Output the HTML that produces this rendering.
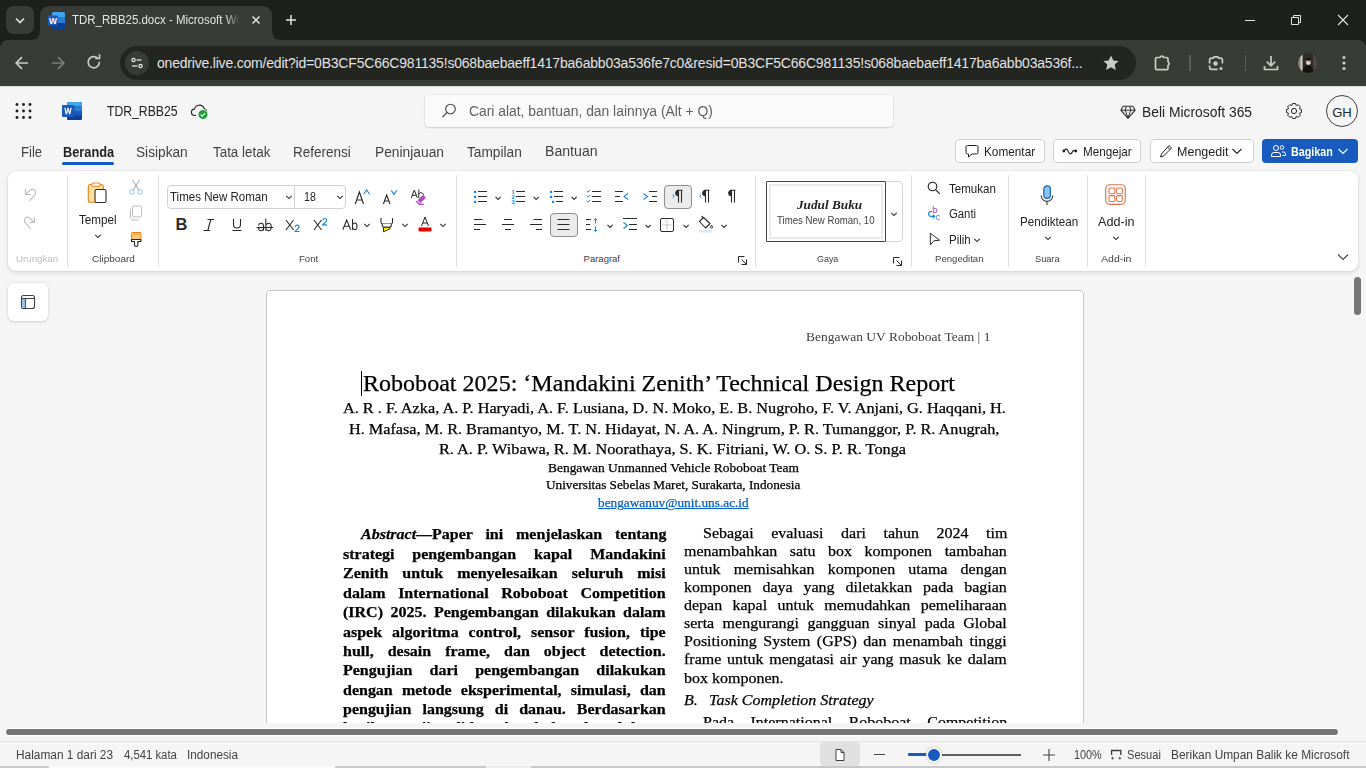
<!DOCTYPE html>
<html><head><meta charset="utf-8">
<style>
*{margin:0;padding:0;box-sizing:border-box}
html,body{width:1366px;height:768px;overflow:hidden;background:#f5f5f5;font-family:"Liberation Sans",sans-serif}
.a{position:absolute}
.sv{position:absolute;overflow:visible}
.ct{color:#e3e3e3;font-size:12px;white-space:nowrap;position:absolute}
.ui{color:#242424;white-space:nowrap;position:absolute}
.serif{font-family:"Liberation Serif",serif;color:#000;white-space:nowrap;position:absolute}
</style></head>
<body>
<!-- ============ CHROME ============ -->
<div class="a" style="left:0;top:0;width:1366px;height:40px;background:#1d201b"></div>
<div class="a" style="left:6px;top:6px;width:28px;height:28px;border-radius:8px;background:#383c36"></div>
<svg class="sv" style="left:0;top:0" width="40" height="40"><path d="M16 18.5l4 4 4-4" stroke="#e3e3e3" stroke-width="1.6" fill="none"/></svg>
<!-- active tab -->
<div class="a" style="left:40px;top:6px;width:232px;height:36px;background:#383c36;border-radius:9px 9px 0 0"></div>
<svg class="sv" style="left:30px;top:30px" width="252" height="12"><path d="M0 10 Q10 10 10 0 L10 10Z" fill="#383c36"/><path d="M252 10 Q242 10 242 0 L242 10Z" fill="#383c36"/></svg>
<!-- word icon small -->
<svg class="sv" style="left:48px;top:12px" width="17" height="17" viewBox="0 0 17 17">
 <rect x="4" y="0" width="13" height="17" rx="1.5" fill="#185abd"/>
 <rect x="4" y="0" width="13" height="6" rx="1.5" fill="#41a5ee"/>
 <rect x="4" y="5" width="13" height="6" fill="#2b7cd3"/>
 <rect x="4" y="11" width="13" height="6" rx="1.5" fill="#103f91"/>
 <rect x="0" y="3.5" width="10" height="10" rx="1" fill="#185abd"/>
 <text x="5" y="11.5" font-family="Liberation Sans" font-weight="bold" font-size="8.5" fill="#fff" text-anchor="middle">W</text>
</svg>
<div class="ct" style="left:72px;top:13px;font-size:12px;width:168px;height:16px;overflow:hidden;-webkit-mask-image:linear-gradient(90deg,#000 calc(100% - 14px),transparent)"><span style="display:inline-block;transform:scaleX(0.956);transform-origin:0 0">TDR_RBB25.docx - Microsoft Word</span></div>
<svg class="sv" style="left:248px;top:12px" width="16" height="16"><path d="M4.5 4.5l7 7M11.5 4.5l-7 7" stroke="#e3e3e3" stroke-width="1.5"/></svg>
<svg class="sv" style="left:283px;top:12px" width="16" height="16"><path d="M8 3v10M3 8h10" stroke="#e3e3e3" stroke-width="1.5"/></svg>
<!-- window controls -->
<svg class="sv" style="left:1240px;top:10px" width="20" height="20"><path d="M5 10.5h10" stroke="#e3e3e3" stroke-width="1"/></svg>
<svg class="sv" style="left:1286px;top:10px" width="20" height="20"><path d="M5.5 7.5h7v7h-7z M7.5 7.5v-2h7v7h-2" stroke="#e3e3e3" stroke-width="1" fill="none"/></svg>
<svg class="sv" style="left:1333px;top:10px" width="20" height="20"><path d="M5 5l10 10M15 5l-10 10" stroke="#e3e3e3" stroke-width="1.1"/></svg>

<!-- toolbar -->
<div class="a" style="left:0;top:38px;width:12px;height:12px;background:#1d201b"></div>
<div class="a" style="left:1354px;top:38px;width:12px;height:12px;background:#1d201b"></div>
<div class="a" style="left:0;top:40px;width:1366px;height:47px;background:#383c36;border-radius:8px 8px 0 0"></div>
<svg class="sv" style="left:12px;top:53px" width="20" height="20"><path d="M16 10H4.5M10 4.2L4.2 10 10 15.8" stroke="#c7ccc4" stroke-width="1.7" fill="none"/></svg>
<svg class="sv" style="left:48px;top:53px" width="20" height="20"><path d="M4 10h11.5M10 4.2l5.8 5.8L10 15.8" stroke="#7a7e78" stroke-width="1.7" fill="none"/></svg>
<svg class="sv" style="left:84px;top:53px" width="20" height="20"><path d="M15.3 8.8A5.6 5.6 0 1 1 13.6 5.2" stroke="#c7ccc4" stroke-width="1.7" fill="none"/><path d="M11.2 5.5h4.3V1.2" stroke="#c7ccc4" stroke-width="1.7" fill="none"/></svg>
<div class="a" style="left:120px;top:46px;width:1016px;height:34px;border-radius:17px;background:#222520"></div>
<div class="a" style="left:125px;top:51px;width:24px;height:24px;border-radius:12px;background:#383c36"></div>
<svg class="sv" style="left:127px;top:53px" width="20" height="20"><circle cx="6.5" cy="7" r="1.6" stroke="#e3e3e3" stroke-width="1.3" fill="none"/><path d="M9.5 7h5" stroke="#e3e3e3" stroke-width="1.3"/><circle cx="13.5" cy="13" r="1.6" stroke="#e3e3e3" stroke-width="1.3" fill="none"/><path d="M5 13h5.5" stroke="#e3e3e3" stroke-width="1.3"/></svg>
<div class="ct" id="url" style="left:157px;top:55px;font-size:14px;letter-spacing:-0.2px;color:#e3e3e3">onedrive.live.com/edit?id=0B3CF5C66C981135!s068baebaeff1417ba6abb03a536fe7c0&amp;resid=0B3CF5C66C981135!s068baebaeff1417ba6abb03a536f...</div>
<svg class="sv" style="left:1101px;top:53px" width="20" height="20"><path d="M10 2.5l2.3 4.9 5.3.6-3.9 3.6 1.1 5.3L10 14.2l-4.8 2.7 1.1-5.3-3.9-3.6 5.3-.6z" fill="#c7ccc4"/></svg>
<svg class="sv" style="left:1152px;top:53px" width="22" height="20"><path d="M3.5 5.8a1.3 1.3 0 0 1 1.3-1.3H8a2 2 0 0 1 3.8 0h2.9a1.3 1.3 0 0 1 1.3 1.3v3a2 2 0 0 1 0 3.6v3a1.3 1.3 0 0 1-1.3 1.3H4.8a1.3 1.3 0 0 1-1.3-1.3z" stroke="#c7ccc4" stroke-width="1.7" fill="none" stroke-linejoin="round"/></svg>
<div class="a" style="left:1189px;top:55px;width:1.5px;height:16px;background:#5b5f5a"></div>
<svg class="sv" style="left:1206px;top:53px" width="20" height="20"><path d="M3.6 10.5V7.2a2 2 0 0 1 2-2h1.6l1-1.3h3.6l1 1.3h1.6a2 2 0 0 1 2 2v3.3M3.6 12.5v1.8a2 2 0 0 0 2 2h6" stroke="#c7ccc4" stroke-width="1.7" fill="none"/><circle cx="9.5" cy="10.5" r="2.2" fill="#c7ccc4"/><circle cx="15" cy="15.5" r="1.5" fill="#c7ccc4"/></svg>
<div class="a" style="left:1244.5px;top:55px;width:1.5px;height:16px;background:#5b5f5a"></div>
<svg class="sv" style="left:1261px;top:53px" width="20" height="20"><path d="M10 3v9.5M5.8 8.6L10 12.8l4.2-4.2M3.5 13v3.5h13V13" stroke="#c7ccc4" stroke-width="1.7" fill="none"/></svg>
<svg class="sv" style="left:1298px;top:53px" width="20" height="20"><defs><clipPath id="avc"><circle cx="10" cy="10" r="10"/></clipPath></defs><g clip-path="url(#avc)"><rect width="20" height="20" fill="#2e2b28"/><rect x="0" y="0" width="5" height="20" fill="#8a847d"/><rect x="2.5" y="0" width="1.5" height="20" fill="#cfcac3"/><rect x="15" y="0" width="5" height="20" fill="#4a4642"/><path d="M4.5 20c0-5 2.3-7.5 5.7-7.5s5.5 2.5 5.5 7.5z" fill="#121110"/><ellipse cx="10.3" cy="8.8" rx="2.5" ry="3" fill="#b9aa9c"/><path d="M7.6 6.8c.4-2.3 4.6-2.3 5.4 0l-.2.8H7.8z" fill="#151413"/><rect x="8.6" y="9.4" width="3.6" height="2.2" rx="1" fill="#e9e9e6"/></g></svg>
<svg class="sv" style="left:1334px;top:53px" width="20" height="20"><circle cx="10" cy="4.5" r="1.6" fill="#c7ccc4"/><circle cx="10" cy="10" r="1.6" fill="#c7ccc4"/><circle cx="10" cy="15.5" r="1.6" fill="#c7ccc4"/></svg>

<!-- ============ WORD ============ -->
<div class="a" style="left:0;top:86px;width:1366px;height:1px;background:#dcdcdc"></div>

<!-- ============ WORD HEADER ============ -->
<svg class="sv" style="left:13px;top:101px" width="20" height="20"><g fill="#1f1f1f"><circle cx="4" cy="3.5" r="1.45"/><circle cx="10.5" cy="3.5" r="1.45"/><circle cx="17" cy="3.5" r="1.45"/><circle cx="4" cy="10" r="1.45"/><circle cx="10.5" cy="10" r="1.45"/><circle cx="17" cy="10" r="1.45"/><circle cx="4" cy="16.5" r="1.45"/><circle cx="10.5" cy="16.5" r="1.45"/><circle cx="17" cy="16.5" r="1.45"/></g></svg>
<svg class="sv" style="left:62px;top:102px" width="21" height="18" viewBox="0 0 21 18">
 <rect x="5" y="0" width="15" height="18" rx="1" fill="#103f91"/>
 <path d="M6 0h13a1 1 0 0 1 1 1v3.5H5V1a1 1 0 0 1 1-1z" fill="#41a5ee"/>
 <rect x="5" y="4.5" width="15" height="4.5" fill="#2b7cd3"/>
 <rect x="5" y="9" width="15" height="4.5" fill="#185abd"/>
 <rect x="5.5" y="4" width="7" height="12" fill="#0b3a8a" opacity=".5"/>
 <rect x="0" y="3" width="12" height="12" rx="1" fill="#185abd"/>
 <path d="M2.3 5.8l1.4 6.4h1.3L6 8l1 4.2h1.3l1.4-6.4H8.5l-.9 4.3-1-4.3H5.4l-1 4.3-.9-4.3z" fill="#fff"/>
</svg>
<div class="ui" id="docname" style="left:107.00px;top:103.20px;font-size:14px;transform:scaleX(0.8716);transform-origin:0 0;">TDR_RBB25</div>
<svg class="sv" style="left:190px;top:101.5px" width="20" height="20"><path d="M6 13.5H4.8a3.2 3.2 0 0 1-.3-6.4 5 5 0 0 1 9.6-.6 3.4 3.4 0 0 1 2.7 3" stroke="#242424" stroke-width="1.1" fill="none"/><circle cx="13" cy="12.5" r="5" fill="#239b3c"/><circle cx="13" cy="12.5" r="5" fill="none" stroke="#f5f5f5" stroke-width="1"/><path d="M10.8 12.6l1.5 1.5 2.8-2.9" stroke="#fff" stroke-width="1.2" fill="none"/></svg>
<div class="a" style="left:425px;top:95px;width:468px;height:32px;border-radius:4px;background:#fafafa;box-shadow:0 0 2px rgba(0,0,0,.12),0 1px 2px rgba(0,0,0,.14)"></div>
<svg class="sv" style="left:440px;top:102px" width="18" height="18"><circle cx="10.5" cy="7" r="4.8" stroke="#424242" stroke-width="1.1" fill="none"/><path d="M7.2 10.4L2.5 15.2" stroke="#424242" stroke-width="1.2"/></svg>
<div class="ui" id="search" style="left:468.81px;top:103.00px;font-size:14px;color:#616161;transform:scaleX(0.9902);transform-origin:0 0;">Cari alat, bantuan, dan lainnya (Alt + Q)</div>
<svg class="sv" style="left:1120px;top:104px" width="16" height="16"><path d="M3.4 2.2h9.2l2.6 4L8 14.4.8 6.2z" stroke="#2b2b2b" stroke-width="1.1" fill="none" stroke-linejoin="round"/><path d="M1 6.2h14M6.3 2.4l-1 3.8M9.7 2.4l1 3.8M5.3 6.3L8 14M10.7 6.3L8 14" stroke="#2b2b2b" stroke-width="1" fill="none"/></svg>
<div class="ui" id="buy" style="left:1142.01px;top:104.00px;font-size:14px;transform:scaleX(0.9892);transform-origin:0 0;">Beli Microsoft 365</div>
<svg class="sv" style="left:1284px;top:101px" width="20" height="20"><path d="M15.48 7.81 L17.45 8.49 L17.45 11.51 L15.48 12.19 L15.42 12.33 L16.33 14.20 L14.20 16.33 L12.33 15.42 L12.19 15.48 L11.51 17.45 L8.49 17.45 L7.81 15.48 L7.67 15.42 L5.80 16.33 L3.67 14.20 L4.58 12.33 L4.52 12.19 L2.55 11.51 L2.55 8.49 L4.52 7.81 L4.58 7.67 L3.67 5.80 L5.80 3.67 L7.67 4.58 L7.81 4.52 L8.49 2.55 L11.51 2.55 L12.19 4.52 L12.33 4.58 L14.20 3.67 L16.33 5.80 L15.42 7.67Z" stroke="#242424" stroke-width="1" fill="none" stroke-linejoin="round"/><circle cx="10" cy="10" r="2.6" stroke="#242424" stroke-width="1" fill="none"/></svg>
<div class="a" style="left:1326px;top:95px;width:32px;height:32px;border-radius:16px;border:1px solid #424242;background:#f5f5f5"></div>
<div class="ui" id="gh" style="left:1326px;top:105px;width:32px;text-align:center;font-size:13px">GH</div>

<!-- ribbon tabs -->
<div class="ui" id="t_file" style="left:20.85px;top:143.60px;font-size:14px;color:#424242;transform:scaleX(0.9345);transform-origin:0 0;">File</div>
<div class="ui" id="t_ber" style="left:62.80px;top:143.60px;font-size:14px;font-weight:bold;color:#242424;transform:scaleX(0.9124);transform-origin:0 0;">Beranda</div>
<div class="a" style="left:62px;top:162px;width:52px;height:3px;border-radius:2px;background:#0f5bc4"></div>
<div class="ui" id="t_sis" style="left:136.22px;top:143.60px;font-size:14px;color:#424242;transform:scaleX(0.9764);transform-origin:0 0;">Sisipkan</div>
<div class="ui" id="t_tat" style="left:212.60px;top:143.60px;font-size:14px;color:#424242;transform:scaleX(0.9567);transform-origin:0 0;">Tata letak</div>
<div class="ui" id="t_ref" style="left:293.43px;top:143.60px;font-size:14px;color:#424242;transform:scaleX(0.9655);transform-origin:0 0;">Referensi</div>
<div class="ui" id="t_pen" style="left:374.61px;top:143.60px;font-size:14px;color:#424242;transform:scaleX(0.9853);transform-origin:0 0;">Peninjauan</div>
<div class="ui" id="t_tam" style="left:466.80px;top:143.60px;font-size:14px;color:#424242;transform:scaleX(0.9783);transform-origin:0 0;">Tampilan</div>
<div class="ui" id="t_ban" style="left:545.00px;top:142.60px;font-size:14px;color:#424242;transform:scaleX(1.0080);transform-origin:0 0;">Bantuan</div>

<div class="a" style="left:955px;top:139px;width:90px;height:24px;border-radius:4px;border:1px solid #d1d1d1;background:#fff"></div>
<svg class="sv" style="left:964px;top:143px" width="16" height="16"><path d="M3.5 2.5h9a1.5 1.5 0 0 1 1.5 1.5v5.5a1.5 1.5 0 0 1-1.5 1.5H8l-3.5 3v-3h-1A1.5 1.5 0 0 1 2 9.5V4a1.5 1.5 0 0 1 1.5-1.5z" stroke="#242424" stroke-width="1" fill="none" stroke-linejoin="round"/></svg>
<div class="ui" id="b_kom" style="left:984.49px;top:143.60px;font-size:13px;transform:scaleX(0.9071);transform-origin:0 0;">Komentar</div>
<div class="a" style="left:1053px;top:139px;width:88px;height:24px;border-radius:4px;border:1px solid #d1d1d1;background:#fff"></div>
<svg class="sv" style="left:1062px;top:143px" width="16" height="16"><circle cx="1.8" cy="8" r="1.4" fill="#242424"/><circle cx="13.8" cy="8" r="1.4" fill="#242424"/><path d="M2 8c1.2-2.2 2.6-2.6 3.6-.8l1.3 2.5c.9 1.6 2.2 1.4 3.2-.3l.6-1.2c.5-.8 1.3-.9 2.4-.2" stroke="#242424" stroke-width="1.2" fill="none"/></svg>
<div class="ui" id="b_mej" style="left:1082.66px;top:143.60px;font-size:13px;transform:scaleX(0.8992);transform-origin:0 0;">Mengejar</div>
<div class="a" style="left:1150px;top:139px;width:104px;height:24px;border-radius:4px;border:1px solid #d1d1d1;background:#fff"></div>
<svg class="sv" style="left:1158px;top:143px" width="16" height="16"><path d="M11 2.5l2.5 2.5-8 8L2.5 14l1-3z M9.5 4l2.5 2.5" stroke="#242424" stroke-width="1" fill="none" stroke-linejoin="round"/></svg>
<div class="ui" id="b_med" style="left:1177.04px;top:143.60px;font-size:13px;transform:scaleX(0.9623);transform-origin:0 0;">Mengedit</div>
<svg class="sv" style="left:1230px;top:144px" width="14" height="14"><path d="M2.5 5l4.5 4.5L11.5 5" stroke="#242424" stroke-width="1.1" fill="none"/></svg>
<div class="a" style="left:1262px;top:139px;width:96px;height:24px;border-radius:4px;background:#185abd"></div>
<svg class="sv" style="left:1270px;top:143px" width="16" height="16"><circle cx="6" cy="5" r="2.5" stroke="#fff" stroke-width="1" fill="none"/><path d="M1.5 13.5v-1.5a2.5 2.5 0 0 1 2.5-2.5h4a2.5 2.5 0 0 1 2.5 2.5v1.5z" stroke="#fff" stroke-width="1" fill="none"/><circle cx="12" cy="4.5" r="1.8" stroke="#fff" stroke-width="1" fill="none"/><path d="M12 9h1.5a2 2 0 0 1 2 2v1.5h-3" stroke="#fff" stroke-width="1" fill="none"/></svg>
<div class="ui" id="b_bag" style="left:1290.99px;top:144.20px;font-size:13px;font-weight:bold;color:#fff;transform:scaleX(0.8276);transform-origin:0 0;">Bagikan</div>
<svg class="sv" style="left:1336px;top:144px" width="14" height="14"><path d="M2.5 5l4.5 4.5L11.5 5" stroke="#fff" stroke-width="1.1" fill="none"/></svg>

<!-- ============ RIBBON ============ -->
<div class="a" style="left:8px;top:171px;width:1350px;height:100px;border-radius:8px;background:#fff;box-shadow:0 0 2px rgba(0,0,0,.12),0 2px 4px rgba(0,0,0,.10)"></div>
<div class="a" style="left:67px;top:175px;width:1px;height:92px;background:#e0e0e0"></div>
<div class="a" style="left:158px;top:175px;width:1px;height:92px;background:#e0e0e0"></div>
<div class="a" style="left:456px;top:175px;width:1px;height:92px;background:#e0e0e0"></div>
<div class="a" style="left:755px;top:175px;width:1px;height:92px;background:#e0e0e0"></div>
<div class="a" style="left:911px;top:175px;width:1px;height:92px;background:#e0e0e0"></div>
<div class="a" style="left:1008px;top:175px;width:1px;height:92px;background:#e0e0e0"></div>
<div class="a" style="left:1087px;top:175px;width:1px;height:92px;background:#e0e0e0"></div>
<div class="a" style="left:1145px;top:175px;width:1px;height:92px;background:#e0e0e0"></div>
<!-- labels -->
<div class="ui" id="l_urg" style="left:16.00px;top:252.5px;font-size:9.5px;color:#bdbdbd;transform:scaleX(1.0245);transform-origin:0 0;">Urungkan</div>
<div class="ui" id="l_clip" style="left:91.84px;top:252.5px;font-size:9.5px;color:#424242;transform:scaleX(1.0536);transform-origin:0 0;">Clipboard</div>
<div class="ui" id="l_font" style="left:299.00px;top:252.5px;font-size:9.5px;color:#424242;transform:scaleX(1.0112);transform-origin:0 0;">Font</div>
<div class="ui" id="l_par" style="left:583.57px;top:252.5px;font-size:9.5px;color:#424242;">Paragraf</div>
<div class="ui" id="l_gaya" style="left:817.44px;top:252.5px;font-size:9.5px;color:#424242;transform:scaleX(0.9380);transform-origin:0 0;">Gaya</div>
<div class="ui" id="l_peng" style="left:935.42px;top:252.5px;font-size:9.5px;color:#424242;transform:scaleX(1.0088);transform-origin:0 0;">Pengeditan</div>
<div class="ui" id="l_sua" style="left:1035.42px;top:252.5px;font-size:9.5px;color:#424242;transform:scaleX(0.9668);transform-origin:0 0;">Suara</div>
<div class="ui" id="l_add" style="left:1101.24px;top:252.5px;font-size:9.5px;color:#424242;transform:scaleX(1.1083);transform-origin:0 0;">Add-in</div>
<!-- launchers -->
<svg class="sv" style="left:738px;top:256px" width="10" height="10"><path d="M.5 6.5V.5h6M3.5 3.5l5 5M8.5 3.5v5h-5" stroke="#2b2b2b" stroke-width="1" fill="none"/></svg>
<svg class="sv" style="left:893px;top:257px" width="10" height="10"><path d="M.5 6.5V.5h6M3.5 3.5l5 5M8.5 3.5v5h-5" stroke="#2b2b2b" stroke-width="1" fill="none"/></svg>
<svg class="sv" style="left:1336px;top:251px" width="14" height="12"><path d="M2 3.5l5 5 5-5" stroke="#424242" stroke-width="1.1" fill="none"/></svg>

<!-- Urungkan -->
<svg class="sv" style="left:22px;top:187px" width="16" height="16"><path d="M3.5 2v5.5h5.2M4 7.2L8.8 2.8Q10.5 1.6 12.3 2.6Q14 3.8 13.6 6Q13.2 7.6 12 8.6L7.3 13.8" stroke="#bdbdbd" stroke-width="1.1" fill="none"/></svg>
<svg class="sv" style="left:22px;top:215px" width="16" height="16"><path d="M12.5 2v5.5H7.3M12 7.2L7.2 2.8Q5.5 1.6 3.7 2.6Q2 3.8 2.4 6Q2.8 7.6 4 8.6L8.7 13.8" stroke="#bdbdbd" stroke-width="1.1" fill="none"/></svg>
<!-- Clipboard -->
<svg class="sv" style="left:87px;top:182px" width="22" height="22"><rect x="1.3" y="2.5" width="15" height="17.8" rx="2" fill="#fbe0a0" stroke="#e8821e" stroke-width="1.1"/><rect x="4.8" y="1" width="8.4" height="3.2" rx="1.5" fill="#fff" stroke="#e8821e" stroke-width="1.1"/><rect x="8" y="7.5" width="11" height="13" rx="1.6" fill="#fff" stroke="#2b2b2b" stroke-width="1.1"/></svg>
<div class="ui" id="tempel" style="left:78.60px;top:212.60px;font-size:12px;transform:scaleX(0.9737);transform-origin:0 0;">Tempel</div>
<svg class="sv" style="left:93px;top:232px" width="10" height="8"><path d="M2.3 2.8l2.7 2.7 2.7-2.7" stroke="#2b2b2b" stroke-width="1.05" fill="none"/></svg>
<svg class="sv" style="left:128px;top:179px" width="16" height="16"><path d="M4.5 1l6.5 10.3M11.5 1L5 11.3" stroke="#9e9e9e" stroke-width="1"/><circle cx="4" cy="13" r="2.2" stroke="#8ec6ee" stroke-width="1" fill="#fff"/><circle cx="12" cy="13" r="2.2" stroke="#8ec6ee" stroke-width="1" fill="#fff"/></svg>
<svg class="sv" style="left:128px;top:205px" width="16" height="16"><rect x="4.5" y="1" width="9" height="11" rx="1.5" stroke="#bdbdbd" stroke-width="1" fill="none"/><path d="M2.5 4v8.5a2.5 2.5 0 0 0 2.5 2.5h6" stroke="#bdbdbd" stroke-width="1" fill="none"/></svg>
<svg class="sv" style="left:128px;top:230px" width="16" height="18"><rect x="3.5" y="2.5" width="9.5" height="7" rx=".8" fill="#fbc870" stroke="#e8821e" stroke-width="1"/><path d="M6.5 2.5v2.2M9 2.5v1.6M11 2.5v2.2" stroke="#e8821e" stroke-width=".9"/><path d="M3.5 9.5v2h3v3.3a1.7 1.7 0 0 0 3.4 0v-3.3h3v-2z" stroke="#242424" stroke-width="1.1" fill="#fff" stroke-linejoin="round"/></svg>

<!-- Font group -->
<div class="a" style="left:167px;top:185px;width:179px;height:24px;border-radius:4px;border:1px solid #d1d1d1;background:#fff"></div>
<div class="a" style="left:294px;top:186px;width:1px;height:22px;background:#d1d1d1"></div>
<div class="ui" id="fontname" style="left:170.20px;top:189.00px;font-size:13px;transform:scaleX(0.8873);transform-origin:0 0;">Times New Roman</div>
<svg class="sv" style="left:284px;top:193px" width="10" height="8"><path d="M2.3 2.8l2.7 2.7 2.7-2.7" stroke="#2b2b2b" stroke-width="1.05" fill="none"/></svg>
<div class="ui" id="fontsize" style="left:304.00px;top:189.00px;font-size:13px;transform:scaleX(0.8148);transform-origin:0 0;">18</div>
<svg class="sv" style="left:335px;top:193px" width="10" height="8"><path d="M2.3 2.8l2.7 2.7 2.7-2.7" stroke="#2b2b2b" stroke-width="1.05" fill="none"/></svg>
<svg class="sv" style="left:353px;top:188px" width="20" height="18"><path d="M2.3 16L6.4 4l4.1 12M3.7 12h5.4" stroke="#242424" stroke-width="1.1" fill="none"/><path d="M10.6 6.3l3-4.3 3 4.3" stroke="#1a86d9" stroke-width="1.1" fill="none"/></svg>
<svg class="sv" style="left:381px;top:188px" width="20" height="18"><path d="M2.4 16l3.3-9 3.3 9M3.5 13h4.4" stroke="#242424" stroke-width="1.1" fill="none"/><path d="M10.2 2.2l2.8 4.2 2.8-4.2" stroke="#1a86d9" stroke-width="1.1" fill="none"/></svg>
<svg class="sv" style="left:409px;top:188px" width="18" height="18"><path d="M2.2 10L5.3 2l3.1 8M3.3 7.3h4M9.8 1.5v8.5M9.8 6.2c.6-1.1 1.4-1.5 2.2-1.5 1.5 0 2.5 1.2 2.5 2.6" stroke="#242424" stroke-width="1" fill="none"/><path d="M8.6 12.2l4.6-4.6a1.2 1.2 0 0 1 1.7 0l1.2 1.2a1.2 1.2 0 0 1 0 1.7L11.5 15.1z" fill="#a94bbd"/><path d="M7.5 13.5l3 2.8h3.6" stroke="#a94bbd" stroke-width="1.4" fill="none" stroke-linecap="round"/></svg>

<div class="ui" style="left:175.5px;top:214.9px;font-size:16.5px;font-weight:bold;color:#2b2b2b">B</div>
<svg class="sv" style="left:201px;top:216px" width="16" height="16"><path d="M6.5 3.5h6.5M2.5 14.5h6.5M9.8 3.5l-3 11" stroke="#2b2b2b" stroke-width="1.1" fill="none"/></svg>
<svg class="sv" style="left:229px;top:216px" width="16" height="16"><path d="M4.5 3v5.5a3.5 3.5 0 0 0 7 0V3M3.5 14.5h9" stroke="#2b2b2b" stroke-width="1.1" fill="none"/></svg>
<svg class="sv" style="left:255px;top:216px" width="20" height="17"><path d="M3.5 9.3c.3-1.4 1.3-2 2.6-2 1.6 0 2.4.9 2.4 2.4v4.8M8.5 11.2c-3.5 0-5 .6-5 1.9 0 1 .8 1.6 2 1.6 1.5 0 3-1 3-2.8M10.8 2.5v12M10.8 10.5c0-2 1.2-3.2 2.7-3.2 1.7 0 2.8 1.4 2.8 3.6s-1.1 3.7-2.8 3.7c-1.5 0-2.7-1.2-2.7-3.2" stroke="#2b2b2b" stroke-width="1.05" fill="none"/><path d="M1.5 11.5h16.5" stroke="#2b2b2b" stroke-width="1.1"/></svg>
<svg class="sv" style="left:284px;top:216px" width="18" height="17"><path d="M2 4l7.5 10M9.5 4L2 14" stroke="#2b2b2b" stroke-width="1.1" fill="none"/><path d="M11.2 11c.2-1.2 1-1.8 2-1.8 1.2 0 1.9.8 1.9 1.7 0 1.6-2.7 2.7-3.9 4.6h4.2" stroke="#1a86d9" stroke-width="1.2" fill="none"/></svg>
<svg class="sv" style="left:312px;top:216px" width="18" height="17"><path d="M2 4l7.5 10M9.5 4L2 14" stroke="#2b2b2b" stroke-width="1.1" fill="none"/><path d="M10.8 4.3c.2-1.2 1-1.8 2-1.8 1.2 0 1.9.8 1.9 1.7 0 1.6-2.7 2.7-3.9 4.6h4.2" stroke="#1a86d9" stroke-width="1.2" fill="none"/></svg>
<svg class="sv" style="left:341px;top:216px" width="18" height="17"><path d="M1.8 13.8L5.7 4l3.9 9.8M3.1 10.3h5.2M11.5 3v10.8M11.5 9.8c0-1.8 1-2.8 2.2-2.8 1.4 0 2.3 1.2 2.3 3.2s-.9 3.4-2.3 3.4c-1.2 0-2.2-1-2.2-2.8" stroke="#2b2b2b" stroke-width="1.05" fill="none"/></svg>
<svg class="sv" style="left:362px;top:221px" width="10" height="8"><path d="M2.3 2.8l2.7 2.7 2.7-2.7" stroke="#2b2b2b" stroke-width="1.05" fill="none"/></svg>
<svg class="sv" style="left:379px;top:216px" width="16" height="18"><path d="M2 2v4.3a1.7 1.7 0 0 0 1.7 1.7h8.1a1.7 1.7 0 0 0 1.7-1.7V2" stroke="#2b2b2b" stroke-width="1.05" fill="none"/><path d="M3.2 8v1.3a2 2 0 0 0 2 2h5.1a2 2 0 0 0 2-2V8" stroke="#2b2b2b" stroke-width="1.05" fill="#fff"/><path d="M4.5 11.3v4.5l6.5-3v-1.5z" fill="#fff100" stroke="#2b2b2b" stroke-width="1" stroke-linejoin="round"/></svg>
<svg class="sv" style="left:400px;top:221px" width="10" height="8"><path d="M2.3 2.8l2.7 2.7 2.7-2.7" stroke="#2b2b2b" stroke-width="1.05" fill="none"/></svg>
<svg class="sv" style="left:417px;top:216px" width="16" height="17"><path d="M4.5 10l3.5-9 3.5 9M5.8 7h4.4" stroke="#242424" stroke-width="1" fill="none"/><rect x="1.5" y="11.5" width="13" height="4" rx="1" fill="#e40000"/></svg>
<svg class="sv" style="left:438px;top:221px" width="10" height="8"><path d="M2.3 2.8l2.7 2.7 2.7-2.7" stroke="#2b2b2b" stroke-width="1.05" fill="none"/></svg>
<!-- Paragraf -->
<svg class="sv" style="left:473px;top:189px" width="16" height="16"><g fill="#1a86d9"><rect x="1" y="1.8" width="2.2" height="2.2"/><rect x="1" y="6.8" width="2.2" height="2.2"/><rect x="1" y="11.8" width="2.2" height="2.2"/></g><path d="M5 2.5h9M5 7.5h9M5 12.5h9" stroke="#2b2b2b" stroke-width="1"/></svg>
<svg class="sv" style="left:494px;top:195px" width="8" height="6"><path d="M1.5 1.8l2.6 2.6 2.6-2.6" stroke="#2b2b2b" stroke-width="1.05" fill="none"/></svg>
<svg class="sv" style="left:511px;top:189px" width="16" height="16"><g fill="#1a86d9" font-family="Liberation Sans" font-size="5.8" font-weight="bold"><text x="0.6" y="5">1</text><text x="0.6" y="10">2</text><text x="0.6" y="15">3</text></g><path d="M5 2.5h9M5 7.5h9M5 12.5h9" stroke="#2b2b2b" stroke-width="1"/></svg>
<svg class="sv" style="left:532px;top:195px" width="8" height="6"><path d="M1.5 1.8l2.6 2.6 2.6-2.6" stroke="#2b2b2b" stroke-width="1.05" fill="none"/></svg>
<svg class="sv" style="left:549px;top:189px" width="16" height="16"><g fill="#1a86d9"><rect x="1" y="1.8" width="2.2" height="2.2"/><rect x="1" y="6.8" width="2.2" height="2.2"/><rect x="3" y="11.8" width="2.2" height="2.2"/></g><path d="M5 2.5h9M5 7.5h9M7 12.5h7" stroke="#2b2b2b" stroke-width="1"/></svg>
<svg class="sv" style="left:570px;top:195px" width="8" height="6"><path d="M1.5 1.8l2.6 2.6 2.6-2.6" stroke="#2b2b2b" stroke-width="1.05" fill="none"/></svg>
<svg class="sv" style="left:586px;top:189px" width="16" height="16"><path d="M.8 2l1.2 1.2 2-2.2M.8 7l1.2 1.2 2-2.2M.8 12l1.2 1.2 2-2.2" stroke="#1a86d9" stroke-width="1" fill="none"/><path d="M6 2.5h9M6 7.5h9M6 12.5h9" stroke="#2b2b2b" stroke-width="1"/></svg>
<svg class="sv" style="left:614px;top:189px" width="16" height="16"><path d="M1 2.5h8M1 7.5h5M1 12.5h8" stroke="#2b2b2b" stroke-width="1"/><path d="M14 4.5L10 7.5l4 3" stroke="#1a86d9" stroke-width="1.1" fill="none"/></svg>
<svg class="sv" style="left:642px;top:189px" width="16" height="16"><path d="M7 2.5h8M10 7.5h5M7 12.5h8" stroke="#2b2b2b" stroke-width="1"/><path d="M1.5 4.5l4 3-4 3" stroke="#1a86d9" stroke-width="1.1" fill="none"/></svg>
<div class="a" style="left:664px;top:185px;width:28px;height:24px;border-radius:4px;background:#ebebeb;border:1px solid #8f8f8f"></div>
<svg class="sv" style="left:670px;top:188px" width="16" height="16"><path d="M8.5 2.2a2.9 2.9 0 0 0 0 5.8z" fill="#2b2b2b" stroke="#2b2b2b" stroke-width="1"/><path d="M8.5 2v12.5M11.5 2v12.5M7.5 2.2h5" stroke="#2b2b2b" stroke-width="1.1" fill="none"/><path d="M2.5 6.5l1.8 1.7-1.8 1.7" stroke="#1a86d9" stroke-width="1" fill="none"/></svg>
<svg class="sv" style="left:697px;top:188px" width="16" height="16"><path d="M8.5 2.2a2.9 2.9 0 0 0 0 5.8z" fill="#2b2b2b" stroke="#2b2b2b" stroke-width="1"/><path d="M8.5 2v12.5M11.5 2v12.5M7.5 2.2h5" stroke="#2b2b2b" stroke-width="1.1" fill="none"/><path d="M4.3 6.5L2.5 8.2l1.8 1.7" stroke="#1a86d9" stroke-width="1" fill="none"/></svg>
<svg class="sv" style="left:725px;top:188px" width="16" height="16"><path d="M6.5 2.2a2.9 2.9 0 0 0 0 5.8z" fill="#2b2b2b" stroke="#2b2b2b" stroke-width="1"/><path d="M6.5 2v12.5M9.5 2v12.5M5.5 2.2h5" stroke="#2b2b2b" stroke-width="1.1" fill="none"/></svg>
<svg class="sv" style="left:473px;top:217px" width="16" height="16"><path d="M1 2.5h8.5M1 7.5h12M1 12.5h6" stroke="#2b2b2b" stroke-width="1"/></svg>
<svg class="sv" style="left:501px;top:217px" width="16" height="16"><path d="M3 2.5h8M1 7.5h12M4 12.5h6" stroke="#2b2b2b" stroke-width="1"/></svg>
<svg class="sv" style="left:529px;top:217px" width="16" height="16"><path d="M4.5 2.5h8.5M1 7.5h12M7 12.5h6" stroke="#2b2b2b" stroke-width="1"/></svg>
<div class="a" style="left:550px;top:213px;width:28px;height:24px;border-radius:4px;background:#ebebeb;border:1px solid #8f8f8f"></div>
<svg class="sv" style="left:556px;top:217px" width="16" height="16"><path d="M1.5 2.5h12M1.5 7.5h12M1.5 12.5h12" stroke="#2b2b2b" stroke-width="1.1"/></svg>
<svg class="sv" style="left:585px;top:217px" width="16" height="16"><path d="M1 2.5h5M1 7.5h4M1 12.5h5" stroke="#2b2b2b" stroke-width="1"/><path d="M10.5 1.5v5M10.5 9.5v5M8.7 3.3l1.8-1.8 1.8 1.8M8.7 12.7l1.8 1.8 1.8-1.8" stroke="#1a86d9" stroke-width="1" fill="none"/></svg>
<svg class="sv" style="left:606px;top:223px" width="8" height="6"><path d="M1.5 1.8l2.6 2.6 2.6-2.6" stroke="#2b2b2b" stroke-width="1.05" fill="none"/></svg>
<svg class="sv" style="left:622px;top:217px" width="16" height="16"><path d="M1 1.5h14M7 7.5h8M7 12.5h8" stroke="#2b2b2b" stroke-width="1"/><path d="M1.5 5.5l4 3-4 3" stroke="#1a86d9" stroke-width="1.1" fill="none"/></svg>
<svg class="sv" style="left:644px;top:223px" width="8" height="6"><path d="M1.5 1.8l2.6 2.6 2.6-2.6" stroke="#2b2b2b" stroke-width="1.05" fill="none"/></svg>
<svg class="sv" style="left:660px;top:217px" width="16" height="16"><rect x=".5" y="1.5" width="13" height="13" rx="1.5" stroke="#2b2b2b" stroke-width="1" fill="none"/><path d="M7 3v10M2.5 8h10" stroke="#a0a0a0" stroke-width="1" stroke-dasharray="1 1"/></svg>
<svg class="sv" style="left:682px;top:223px" width="8" height="6"><path d="M1.5 1.8l2.6 2.6 2.6-2.6" stroke="#2b2b2b" stroke-width="1.05" fill="none"/></svg>
<svg class="sv" style="left:698px;top:215px" width="16" height="18"><path d="M5.5 2.5l6.5 6-4.5 4.5-6-6.5z" stroke="#2b2b2b" stroke-width="1.1" fill="#fff" stroke-linejoin="round"/><path d="M3.5 1L5.5 3" stroke="#2b2b2b" stroke-width="1.1"/><path d="M13.5 10c.8 1.2 1 1.8 1 2.2a1 1 0 0 1-2 0c0-.4.2-1 1-2.2z" stroke="#2b2b2b" stroke-width="1" fill="none"/><rect x="1" y="15" width="13" height="2.5" fill="#dde7f5"/></svg>
<svg class="sv" style="left:720px;top:223px" width="8" height="6"><path d="M1.5 1.8l2.6 2.6 2.6-2.6" stroke="#2b2b2b" stroke-width="1.05" fill="none"/></svg>
<!-- Gaya -->
<div class="a" style="left:766px;top:181px;width:137px;height:61px;border-radius:4px;border:1px solid #d6d6d6;background:#fff"></div>
<div class="a" style="left:766px;top:181px;width:120px;height:61px;border:1.5px solid #424242;background:#fff;border-radius:1px"></div>
<div class="a" style="left:769px;top:184px;width:114px;height:55px;border:2px solid #ebebeb"></div>
<div class="serif" id="judul" style="left:797.20px;top:197.40px;font-size:13px;font-weight:bold;font-style:italic;color:#242424;transform:scaleX(1.0188);transform-origin:0 0;">Judul Buku</div>
<div class="ui" id="tnr10" style="left:777.20px;top:215.40px;font-size:10px;color:#424242;transform:scaleX(0.9624);transform-origin:0 0;">Times New Roman, 10</div>
<svg class="sv" style="left:889px;top:210px" width="10" height="8"><path d="M2.3 2.8l2.7 2.7 2.7-2.7" stroke="#2b2b2b" stroke-width="1.05" fill="none"/></svg>

<!-- Pengeditan -->
<svg class="sv" style="left:927px;top:181px" width="14" height="14"><circle cx="5.5" cy="5.5" r="4.3" stroke="#242424" stroke-width="1.1" fill="none"/><path d="M8.6 8.6l4.2 4.2" stroke="#242424" stroke-width="1.2"/></svg>
<div class="ui" id="temukan" style="left:948.80px;top:181.80px;font-size:12px;transform:scaleX(0.9625);transform-origin:0 0;">Temukan</div>
<svg class="sv" style="left:926px;top:204px" width="16" height="18"><text x="6.3" y="8.8" font-family="Liberation Sans" font-size="9.5" fill="#a43fb8">b</text><text x="9.6" y="15.9" font-family="Liberation Sans" font-size="9" fill="#1a86d9">c</text><path d="M5.8 7.6H4.6a2 2 0 0 0-1.9 2.4 2 2 0 0 0 2 2.3h3.4M6.9 10.6l1.8 1.7-1.8 1.7" stroke="#1a86d9" stroke-width="1.2" fill="none"/></svg>
<div class="ui" id="ganti" style="left:948.80px;top:207.00px;font-size:12px;transform:scaleX(0.9436);transform-origin:0 0;">Ganti</div>
<svg class="sv" style="left:928px;top:231px" width="14" height="16"><path d="M2.3 2.2v11.8l3.6-4.2 5.7-.6z" stroke="#2b2b2b" stroke-width="1" fill="none" stroke-linejoin="round"/></svg>
<div class="ui" id="pilih" style="left:948.80px;top:233.00px;font-size:12px;transform:scaleX(0.9551);transform-origin:0 0;">Pilih</div>
<svg class="sv" style="left:972px;top:236px" width="10" height="8"><path d="M2.3 2.8l2.7 2.7 2.7-2.7" stroke="#2b2b2b" stroke-width="1.05" fill="none"/></svg>

<!-- Suara -->
<svg class="sv" style="left:1038px;top:184px" width="18" height="22"><rect x="5.8" y="1.8" width="6.6" height="12.6" rx="3.3" fill="#8dc3ef" stroke="#1467c0" stroke-width="1.2"/><path d="M3.2 11.6a5.8 5.8 0 0 0 11.6 0M9 17.4v3.5" stroke="#3b3b3b" stroke-width="1.1" fill="none"/></svg>
<div class="ui" id="pendik" style="left:1019.60px;top:215.00px;font-size:12px;transform:scaleX(0.9701);transform-origin:0 0;">Pendiktean</div>
<svg class="sv" style="left:1043px;top:234px" width="10" height="8"><path d="M2.3 2.8l2.7 2.7 2.7-2.7" stroke="#2b2b2b" stroke-width="1.05" fill="none"/></svg>

<!-- Add-in -->
<svg class="sv" style="left:1104px;top:183px" width="23" height="23"><rect x="1.7" y="1.7" width="19.6" height="19.6" rx="4" fill="#fff" stroke="#e2714a" stroke-width="1.15"/><g fill="none" stroke="#e2714a" stroke-width="1.05"><rect x="5" y="5" width="5.8" height="5.8" rx="1.2"/><rect x="12.6" y="5" width="5.8" height="5.8" rx="1.2"/><rect x="5" y="12.6" width="5.8" height="5.8" rx="1.2"/><rect x="12.6" y="12.6" width="5.8" height="5.8" rx="1.2"/></g></svg>
<div class="ui" id="addin" style="left:1098.20px;top:215.00px;font-size:12px;transform:scaleX(1.0530);transform-origin:0 0;">Add-in</div>
<svg class="sv" style="left:1111px;top:234px" width="10" height="8"><path d="M2.3 2.8l2.7 2.7 2.7-2.7" stroke="#2b2b2b" stroke-width="1.05" fill="none"/></svg>

<!-- ============ DOCUMENT ============ -->
<div class="a" style="left:0;top:271px;width:1350px;height:452px;overflow:hidden">
<div class="a" style="left:0;top:-271px;width:1366px;height:768px">
<div class="a" style="left:266px;top:290px;width:818px;height:520px;background:#fff;border:1px solid #c8c8c8;border-radius:4px"></div>
<div class="serif" id="hdr" style="left:806.39px;top:330.59px;font-size:12.663px;line-height:12.663px;color:#404040;-webkit-text-stroke:0;transform:scaleX(1.0655);transform-origin:0 0;">Bengawan UV Roboboat Team | 1</div>
<div class="a" style="left:361px;top:371px;width:1px;height:25px;background:#000"></div>
<div class="serif" id="title" style="left:362.60px;top:372.58px;font-size:22.800px;line-height:22.800px;-webkit-text-stroke:0.25px currentColor;transform:scaleX(1.0551);transform-origin:0 0;">Roboboat 2025: ‘Mandakini Zenith’ Technical Design Report</div>
<div class="serif" id="au1" style="left:343.20px;top:400.38px;font-size:15.200px;line-height:15.200px;-webkit-text-stroke:0.25px currentColor;transform:scaleX(1.0704);transform-origin:0 0;">A. R . F. Azka, A. P. Haryadi, A. F. Lusiana, D. N. Moko, E. B. Nugroho, F. V. Anjani, G. Haqqani, H.</div>
<div class="serif" id="au2" style="left:349.40px;top:420.68px;font-size:15.200px;line-height:15.200px;-webkit-text-stroke:0.25px currentColor;transform:scaleX(1.0674);transform-origin:0 0;">H. Mafasa, M. R. Bramantyo, M. T. N. Hidayat, N. A. A. Ningrum, P. R. Tumanggor, P. R. Anugrah,</div>
<div class="serif" id="au3" style="left:439.19px;top:440.98px;font-size:15.200px;line-height:15.200px;-webkit-text-stroke:0.25px currentColor;transform:scaleX(1.0720);transform-origin:0 0;">R. A. P. Wibawa, R. M. Noorathaya, S. K. Fitriani, W. O. S. P. R. Tonga</div>
<div class="serif" id="af1" style="left:548.10px;top:462.49px;font-size:12.663px;line-height:12.663px;-webkit-text-stroke:0.25px currentColor;transform:scaleX(1.0620);transform-origin:0 0;">Bengawan Unmanned Vehicle Roboboat Team</div>
<div class="serif" id="af2" style="left:545.90px;top:479.29px;font-size:12.663px;line-height:12.663px;-webkit-text-stroke:0.25px currentColor;transform:scaleX(1.0461);transform-origin:0 0;">Universitas Sebelas Maret, Surakarta, Indonesia</div>
<div class="serif" id="af3" style="left:598.30px;top:497.39px;font-size:12.663px;line-height:12.663px;color:#0563c1;text-decoration:underline;-webkit-text-stroke:0.25px currentColor;transform:scaleX(1.0505);transform-origin:0 0;">bengawanuv@unit.uns.ac.id</div>
<div class="serif" id="lc0" style="left:360.50px;top:526.28px;font-size:15.200px;line-height:15.200px;width:290.23px;text-align:justify;text-align-last:justify;white-space:normal;font-weight:bold;-webkit-text-stroke:0.25px currentColor;transform:scaleX(1.0526);transform-origin:0 0;"><i>Abstract</i>—Paper ini menjelaskan tentang</div>
<div class="serif" id="lc1" style="left:343.30px;top:545.73px;font-size:15.200px;line-height:15.200px;width:306.56px;text-align:justify;text-align-last:justify;white-space:normal;font-weight:bold;-webkit-text-stroke:0.25px currentColor;transform:scaleX(1.0526);transform-origin:0 0;">strategi pengembangan kapal Mandakini</div>
<div class="serif" id="lc2" style="left:343.30px;top:565.18px;font-size:15.200px;line-height:15.200px;width:306.56px;text-align:justify;text-align-last:justify;white-space:normal;font-weight:bold;-webkit-text-stroke:0.25px currentColor;transform:scaleX(1.0526);transform-origin:0 0;">Zenith untuk menyelesaikan seluruh misi</div>
<div class="serif" id="lc3" style="left:343.30px;top:584.63px;font-size:15.200px;line-height:15.200px;width:306.56px;text-align:justify;text-align-last:justify;white-space:normal;font-weight:bold;-webkit-text-stroke:0.25px currentColor;transform:scaleX(1.0526);transform-origin:0 0;">dalam International Roboboat Competition</div>
<div class="serif" id="lc4" style="left:343.30px;top:604.08px;font-size:15.200px;line-height:15.200px;width:306.56px;text-align:justify;text-align-last:justify;white-space:normal;font-weight:bold;-webkit-text-stroke:0.25px currentColor;transform:scaleX(1.0526);transform-origin:0 0;">(IRC) 2025. Pengembangan dilakukan dalam</div>
<div class="serif" id="lc5" style="left:343.30px;top:623.53px;font-size:15.200px;line-height:15.200px;width:306.56px;text-align:justify;text-align-last:justify;white-space:normal;font-weight:bold;-webkit-text-stroke:0.25px currentColor;transform:scaleX(1.0526);transform-origin:0 0;">aspek algoritma control, sensor fusion, tipe</div>
<div class="serif" id="lc6" style="left:343.30px;top:642.98px;font-size:15.200px;line-height:15.200px;width:306.56px;text-align:justify;text-align-last:justify;white-space:normal;font-weight:bold;-webkit-text-stroke:0.25px currentColor;transform:scaleX(1.0526);transform-origin:0 0;">hull, desain frame, dan object detection.</div>
<div class="serif" id="lc7" style="left:343.30px;top:662.43px;font-size:15.200px;line-height:15.200px;width:306.56px;text-align:justify;text-align-last:justify;white-space:normal;font-weight:bold;-webkit-text-stroke:0.25px currentColor;transform:scaleX(1.0526);transform-origin:0 0;">Pengujian dari pengembangan dilakukan</div>
<div class="serif" id="lc8" style="left:343.30px;top:681.88px;font-size:15.200px;line-height:15.200px;width:306.56px;text-align:justify;text-align-last:justify;white-space:normal;font-weight:bold;-webkit-text-stroke:0.25px currentColor;transform:scaleX(1.0526);transform-origin:0 0;">dengan metode eksperimental, simulasi, dan</div>
<div class="serif" id="lc9" style="left:343.30px;top:701.33px;font-size:15.200px;line-height:15.200px;width:306.56px;text-align:justify;text-align-last:justify;white-space:normal;font-weight:bold;-webkit-text-stroke:0.25px currentColor;transform:scaleX(1.0526);transform-origin:0 0;">pengujian langsung di danau. Berdasarkan</div>
<div class="serif" id="lc10" style="left:343.30px;top:719.28px;font-size:15.200px;line-height:15.200px;width:306.56px;text-align:justify;text-align-last:justify;white-space:normal;font-weight:bold;-webkit-text-stroke:0.25px currentColor;transform:scaleX(1.0526);transform-origin:0 0;">hasil pengujian didapatkan bahwa kapal dapat</div>
<div class="serif" id="rc0" style="left:702.60px;top:524.98px;font-size:15.200px;line-height:15.200px;width:289.18px;text-align:justify;text-align-last:justify;white-space:normal;-webkit-text-stroke:0.25px currentColor;transform:scaleX(1.0526);transform-origin:0 0;">Sebagai evaluasi dari tahun 2024 tim</div>
<div class="serif" id="rc1" style="left:684.20px;top:543.05px;font-size:15.200px;line-height:15.200px;width:306.66px;text-align:justify;text-align-last:justify;white-space:normal;-webkit-text-stroke:0.25px currentColor;transform:scaleX(1.0526);transform-origin:0 0;">menambahkan satu box komponen tambahan</div>
<div class="serif" id="rc2" style="left:684.20px;top:561.12px;font-size:15.200px;line-height:15.200px;width:306.66px;text-align:justify;text-align-last:justify;white-space:normal;-webkit-text-stroke:0.25px currentColor;transform:scaleX(1.0526);transform-origin:0 0;">untuk memisahkan komponen utama dengan</div>
<div class="serif" id="rc3" style="left:684.20px;top:579.19px;font-size:15.200px;line-height:15.200px;width:306.66px;text-align:justify;text-align-last:justify;white-space:normal;-webkit-text-stroke:0.25px currentColor;transform:scaleX(1.0526);transform-origin:0 0;">komponen daya yang diletakkan pada bagian</div>
<div class="serif" id="rc4" style="left:684.20px;top:597.26px;font-size:15.200px;line-height:15.200px;width:306.66px;text-align:justify;text-align-last:justify;white-space:normal;-webkit-text-stroke:0.25px currentColor;transform:scaleX(1.0526);transform-origin:0 0;">depan kapal untuk memudahkan pemeliharaan</div>
<div class="serif" id="rc5" style="left:684.20px;top:615.33px;font-size:15.200px;line-height:15.200px;width:306.66px;text-align:justify;text-align-last:justify;white-space:normal;-webkit-text-stroke:0.25px currentColor;transform:scaleX(1.0526);transform-origin:0 0;">serta mengurangi gangguan sinyal pada Global</div>
<div class="serif" id="rc6" style="left:684.20px;top:633.40px;font-size:15.200px;line-height:15.200px;width:306.66px;text-align:justify;text-align-last:justify;white-space:normal;-webkit-text-stroke:0.25px currentColor;transform:scaleX(1.0526);transform-origin:0 0;">Positioning System (GPS) dan menambah tinggi</div>
<div class="serif" id="rc7" style="left:684.20px;top:651.47px;font-size:15.200px;line-height:15.200px;width:306.66px;text-align:justify;text-align-last:justify;white-space:normal;-webkit-text-stroke:0.25px currentColor;transform:scaleX(1.0526);transform-origin:0 0;">frame untuk mengatasi air yang masuk ke dalam</div>
<div class="serif" id="rc8" style="left:684.20px;top:669.54px;font-size:15.200px;line-height:15.200px;-webkit-text-stroke:0.25px currentColor;transform:scaleX(1.0526);transform-origin:0 0;">box komponen.</div>
<div class="serif" id="rcB" style="left:683.90px;top:692.18px;font-size:15.200px;line-height:15.200px;font-style:italic;-webkit-text-stroke:0.25px currentColor;transform:scaleX(1.0526);transform-origin:0 0;">B.</div>
<div class="serif" id="rcT" style="left:708.70px;top:692.18px;font-size:15.200px;line-height:15.200px;font-style:italic;-webkit-text-stroke:0.25px currentColor;transform:scaleX(1.0526);transform-origin:0 0;">Task Completion Strategy</div>
<div class="serif" id="rcP" style="left:702.80px;top:713.88px;font-size:15.200px;line-height:15.200px;width:288.99px;text-align:justify;text-align-last:justify;white-space:normal;-webkit-text-stroke:0.25px currentColor;transform:scaleX(1.0526);transform-origin:0 0;">Pada International Roboboat Competition</div>
</div></div>

<!-- side panel button -->
<div class="a" style="left:8px;top:283px;width:40px;height:38px;border-radius:6px;background:#fff;box-shadow:0 1px 3px rgba(0,0,0,.14),0 0 2px rgba(0,0,0,.08)"></div>
<svg class="sv" style="left:20px;top:294px" width="16" height="16"><rect x="1.5" y="1.5" width="13" height="13" rx="2" fill="#fff" stroke="#424242" stroke-width="1.1"/><rect x="2.2" y="5" width="3.3" height="9" fill="#8cc3f2"/><path d="M5.5 4.5v10" stroke="#0f6cbd" stroke-width="1.1"/><path d="M1.5 4.5h13" stroke="#424242" stroke-width="1.1"/></svg>
<!-- vertical scrollbar -->
<div class="a" style="left:1354px;top:277px;width:7px;height:38px;border-radius:4px;background:#777676"></div>
<!-- horizontal scrollbar -->
<div class="a" style="left:6px;top:729px;width:1332px;height:6px;border-radius:3px;background:#767676;box-shadow:0 0 0 1px #fff"></div>
<!-- status bar -->
<div class="a" style="left:0;top:741px;width:1366px;height:1px;background:#e1e1e1"></div>
<div class="ui" id="st1" style="left:16.21px;top:748.00px;font-size:12px;color:#424242;transform:scaleX(0.9897);transform-origin:0 0;">Halaman 1 dari 23</div>
<div class="ui" id="st2" style="left:123.80px;top:748.00px;font-size:12px;color:#424242;transform:scaleX(0.9430);transform-origin:0 0;">4,541 kata</div>
<div class="ui" id="st3" style="left:186.62px;top:748.00px;font-size:12px;color:#424242;transform:scaleX(0.9805);transform-origin:0 0;">Indonesia</div>
<div class="a" style="left:820px;top:742px;width:40px;height:24px;border-radius:4px;background:#e0e0e0"></div>
<svg class="sv" style="left:832px;top:747px" width="16" height="16"><path d="M4 2.5h5l3 3v8H4z M9 2.5v3h3" stroke="#424242" stroke-width="1" fill="#fff" stroke-linejoin="round"/></svg>
<div class="a" style="left:874px;top:754px;width:11px;height:1px;background:#424242"></div>
<div class="a" style="left:908px;top:753px;width:26px;height:3px;border-radius:1px;background:#185abd"></div>
<div class="a" style="left:934px;top:754px;width:87px;height:2px;background:#616161"></div>
<div class="a" style="left:926px;top:747px;width:16px;height:16px;border-radius:8px;background:#185abd;border:2px solid #fff;box-shadow:0 0 1px rgba(0,0,0,.5)"></div>
<svg class="sv" style="left:1041px;top:747px" width="16" height="16"><path d="M8 2v12M2 8h12" stroke="#424242" stroke-width="1.1"/></svg>
<div class="ui" id="st4" style="left:1074.28px;top:748.00px;font-size:12px;color:#424242;transform:scaleX(0.9011);transform-origin:0 0;">100%</div>
<svg class="sv" style="left:1110px;top:748px" width="13" height="14"><path d="M1.6 7V2.5h9.2V7" stroke="#3a3a3a" stroke-width="1.3" fill="none"/><path d="M1 10.2l2-1.6v3.2z M11.3 10.2l-2-1.6v3.2z" fill="#3a3a3a"/><path d="M2.5 10.2h1.6M8.3 10.2h1.6" stroke="#7a7a7a" stroke-width="1.1"/></svg>
<div class="ui" id="st5" style="left:1127.40px;top:748.00px;font-size:12px;color:#424242;transform:scaleX(0.9222);transform-origin:0 0;">Sesuai</div>
<div class="ui" id="st6" style="left:1170.61px;top:748.00px;font-size:12px;color:#424242;transform:scaleX(0.9910);transform-origin:0 0;">Berikan Umpan Balik ke Microsoft</div>
<div class="a" style="left:0;top:766px;width:1366px;height:2px;background:#c8c8c8"></div>
<div class="a" style="left:49px;top:766px;width:286px;height:2px;background:#fafafa"></div>
<div class="a" style="left:486px;top:766px;width:45px;height:2px;background:#ececec"></div>
</body></html>
